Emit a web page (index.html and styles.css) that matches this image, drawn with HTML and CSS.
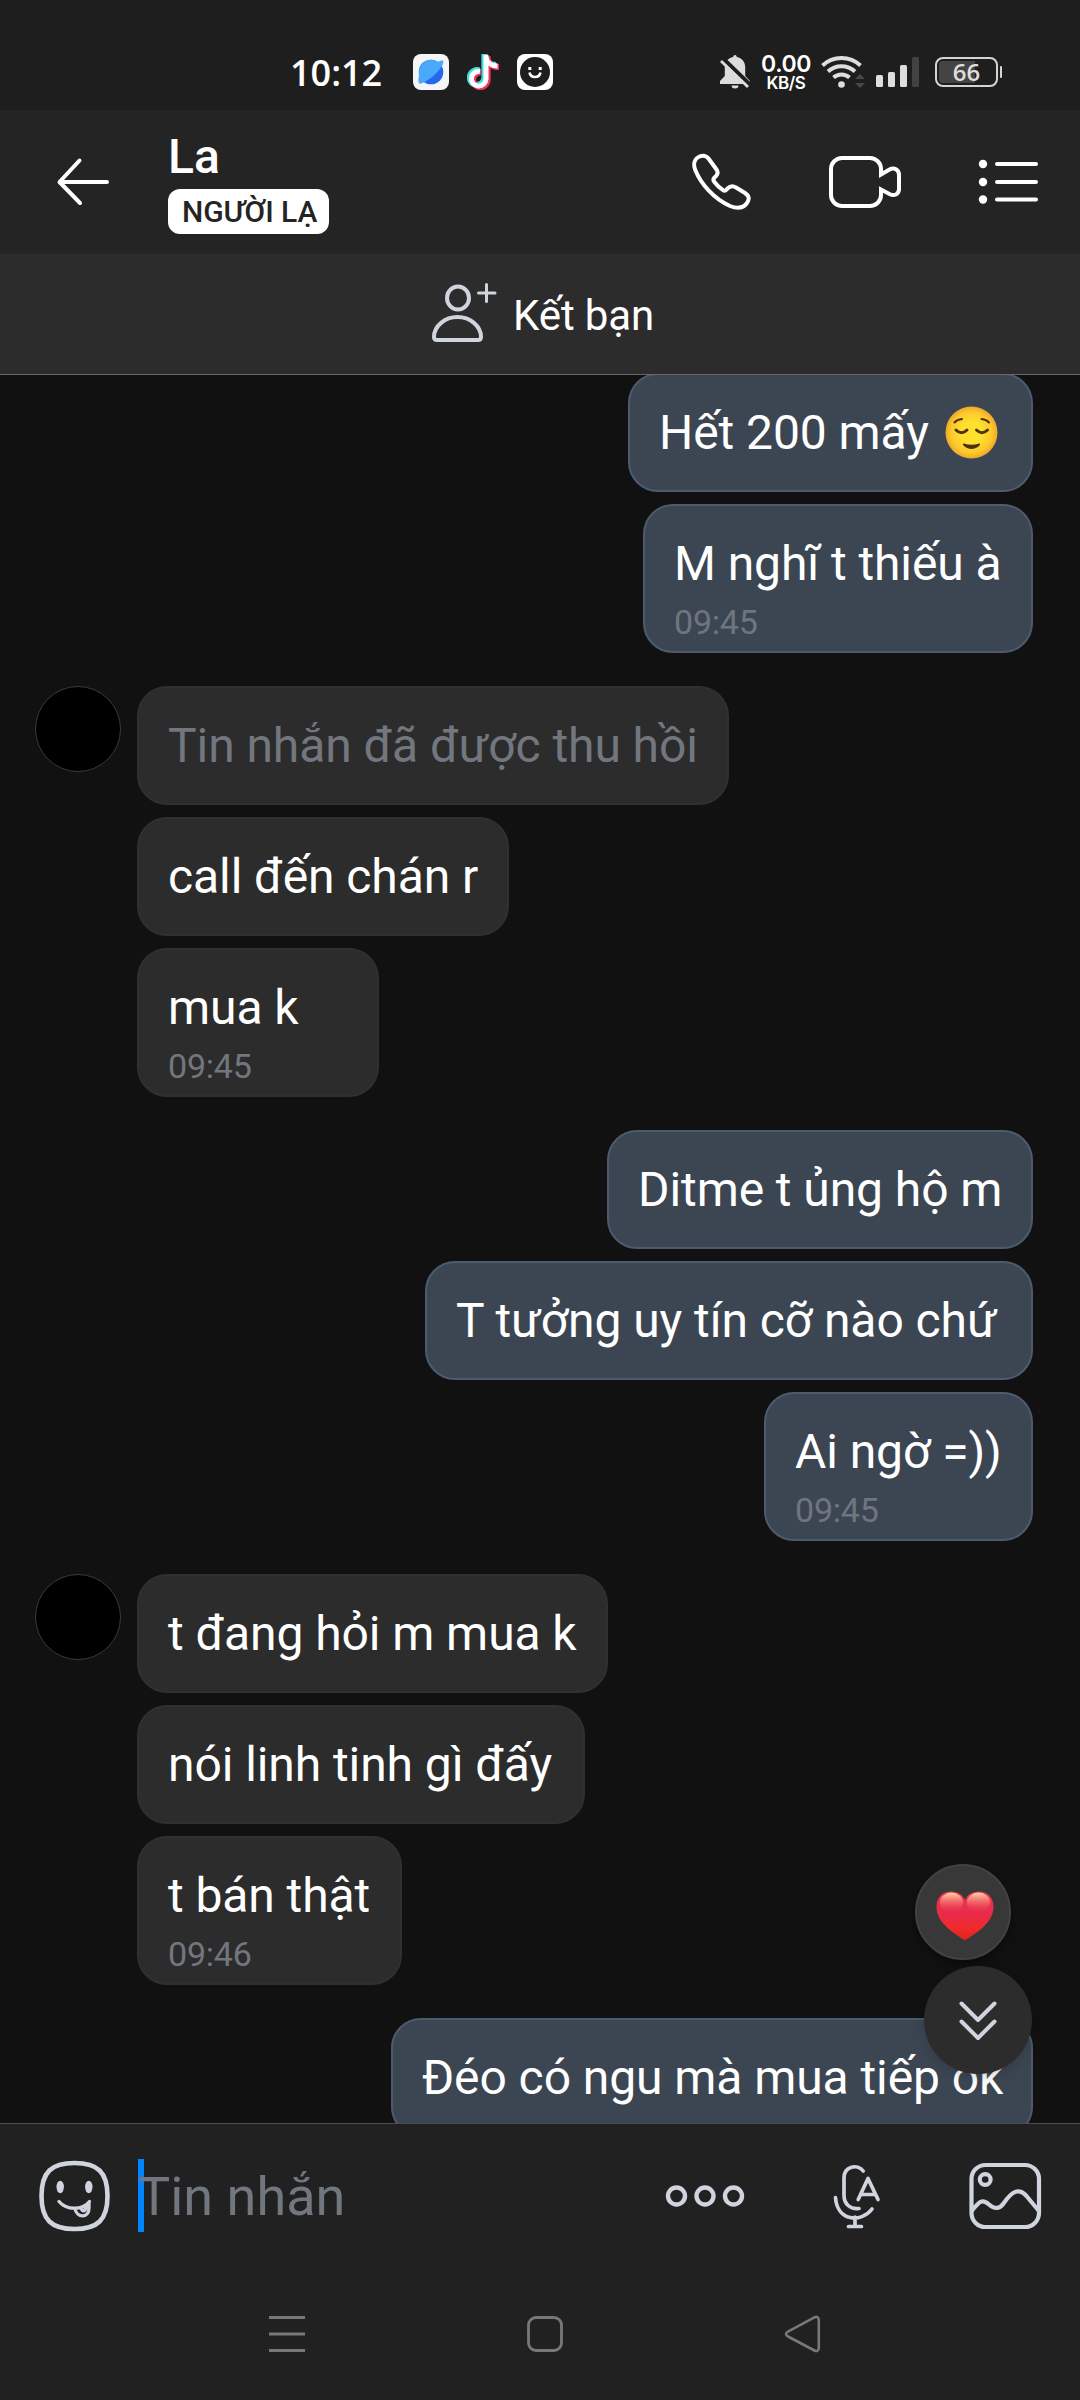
FILE: index.html
```html
<!DOCTYPE html>
<html lang="vi">
<head>
<meta charset="utf-8">
<title>La</title>
<link rel="stylesheet" href="styles.css">
</head>
<body>
<div class="phone">
  <div class="status">
    <span class="clock">10:12</span>
    <svg class="app-planet" width="36" height="36" viewBox="0 0 36 36"><rect width="36" height="36" rx="8" fill="#f4f5f7"/><circle cx="18" cy="18" r="12.3" fill="#2468ee"/><path d="M7 30C4 27 6 25 6 19A12.3 12.3 0 0 1 25 8C29 5.5 32 6 29.500 11C24 20 17 26 7 30Z" fill="#4aa9fb"/></svg>
    <svg class="app-note" width="33" height="36" viewBox="0 0 33 36"><g fill="none" stroke-width="6.200"><path d="M17.500 0V24.500A7.300 7.300 0 1 1 12.300 16.500M17.500 2C18 8 23 11 29 11" stroke="#3fe0dc"/><path d="M20.500 2V26A7.300 7.300 0 1 1 14 18.500M20.500 4C21 10 26 13 32 13" stroke="#f3355e"/><path d="M19 1V25A7.300 7.300 0 1 1 13 17.500M19 3C19.500 9 25 12 30.500 12" stroke="#fff" stroke-width="5"/></g></svg>
    <svg class="app-smile" width="36" height="36" viewBox="0 0 36 36"><rect width="36" height="36" rx="8" fill="#fff"/><circle cx="18" cy="18" r="15" fill="#1e1e1e"/><path d="M11.300 14.500h3M21.700 14.500h3" stroke="#fff" stroke-width="3"/><path d="M12.500 18.500a5.600 5.600 0 0 0 11 0" fill="none" stroke="#fff" stroke-width="2.600"/></svg>
    <svg class="bell" width="32" height="36" viewBox="719 54 32 36"><path d="M735 55c1.200 0 1.800 1 1.800 2 5.200 1 8.400 5 8.400 10v9l4.800 5v3h-30v-3l4.800-5v-9c0-5 3.200-9 8.400-10 0-1 .6-2 1.800-2zM731.500 85.500h7a3.500 3 0 0 1-7 0z" fill="#dcdcdc"/><path d="M722.500 58l29 28" stroke="#1e1e1e" stroke-width="4"/><path d="M721 61l27 26" stroke="#dcdcdc" stroke-width="2.800"/></svg>
    <div class="speed"><span class="rate">0.00</span><span class="unit">KB/S</span></div>
    <svg class="wifi" width="46" height="36" viewBox="820 53 46 36"><g fill="none" stroke="#dedede" stroke-width="4"><path d="M822.500 65.500a28 28 0 0 1 38 0M828 71.500a20 20 0 0 1 27 0M833.500 77.500a12 12 0 0 1 16 0"/></g><circle cx="841.500" cy="84.500" r="3.300" fill="#dedede"/><path d="M855 79l5-5 5 5zM855 83l5 5 5-5z" fill="#484848"/></svg>
    <svg class="signal" width="44" height="32" viewBox="876 56 44 32"><g fill="#dedede"><rect x="876" y="75" width="7" height="12" rx="1.500"/><rect x="888" y="72" width="7" height="15" rx="1.500"/><rect x="900" y="65" width="7" height="22" rx="1.500"/></g><rect x="912" y="57" width="7" height="30" rx="1.500" fill="#424242"/></svg>
    <div class="battery"><div class="level">66</div></div>
  </div>

  <header class="header">
    <svg class="back" width="54" height="50" viewBox="56 157.500 54 50"><path d="M79.500 161L59.500 182.500L80 203.500M60 182.500H107" fill="none" stroke="#fff" stroke-width="4" stroke-linecap="round" stroke-linejoin="round"/></svg>
    <div class="who"><div class="name">La</div><div class="badge">NGƯỜI LẠ</div></div>
    <svg class="call" width="60" height="60" viewBox="691 152 60 60"><path d="M699.500 156.500C703 155 706.500 156 708.500 158.500L716.500 169.500C719 173 717 175.500 714.500 177.500C713 179 713 180 714 181.500C717 185.500 720 188.500 723.500 190.500C725.500 191.500 726.500 189.500 727.500 188.500C730 186 733 185.500 736 187.500L745 193C749.500 196 749.500 199.500 747 203C743 208.500 737.500 209 730 206C714 199 701 184 695.500 170.500C692.500 163.500 695 158.500 699.500 156.500Z" fill="none" stroke="#fff" stroke-width="4" stroke-linejoin="round"/></svg>
    <svg class="video" width="74" height="56" viewBox="828 154 74 56"><path d="M881 174.500V169A11 11 0 0 0 870 158H842A11 11 0 0 0 831 169V195A11 11 0 0 0 842 206H870A11 11 0 0 0 881 195V189.500L889.500 194C894 196.500 899 194.500 899 189V175C899 169.500 894 167 889.500 169.500Z" fill="none" stroke="#fff" stroke-width="4"/></svg>
    <svg class="menu" width="62" height="50" viewBox="977 157 62 50"><g fill="#fff"><circle cx="983" cy="164" r="4.200"/><circle cx="983" cy="182" r="4.200"/><circle cx="983" cy="199.500" r="4.200"/></g><path d="M997 164H1036M997 182H1036M997 199.500H1036" stroke="#fff" stroke-width="4" stroke-linecap="round"/></svg>
  </header>

  <div class="add-friend">
    <svg width="66" height="64" viewBox="431 282 66 64"><g fill="none" stroke="#d0d4df" stroke-width="4" stroke-linecap="round" stroke-linejoin="round"><ellipse cx="458" cy="298" rx="11" ry="11.500"/><path d="M457.500 317C445 317 434 326 434 337Q434 340 437 340H478Q481 340 481 337C481 326 470 317 457.500 317Z"/><path d="M486.500 284.500V301.500M478.500 293H495" stroke-width="3"/></g></svg>
    <span>Kết bạn</span>
  </div>

  <main class="chat">
    <div class="group mine">
      <div class="bubble w405">Hết 200 mấy <svg class="emoji" width="53" height="53" viewBox="0 0 53 53"><defs><radialGradient id="face"><stop offset=".4" stop-color="#ffe02e"/><stop offset=".8" stop-color="#fdc82b"/><stop offset="1" stop-color="#eda72a"/></radialGradient></defs><circle cx="26.500" cy="26.500" r="26" fill="url(#face)"/><g fill="none" stroke="#4e3209" stroke-linecap="round"><path d="M9.500 16.500Q12 13.500 17 13M44 16.500Q41.500 13.500 36.500 13" stroke-width="2"/><path d="M11 24Q16.500 29.500 22 24M31.500 24Q37 29.500 42.500 24" stroke-width="3"/></g><path d="M19 37.500Q26.500 40 34 37.500C35 37.300 35.500 38.500 34.500 39.500C30.500 44 22.500 44 18.500 39.500C17.500 38.500 18 37.300 19 37.500Z" fill="#4e3209"/></svg></div>
      <div class="bubble timed w390">M nghĩ t thiếu à<time>09:45</time></div>
    </div>
    <div class="group theirs">
      <div class="avatar"></div>
      <div class="stack">
        <div class="bubble recalled w591">Tin nhắn đã được thu hồi</div>
        <div class="bubble w372">call đến chán r</div>
        <div class="bubble timed w242">mua k<time>09:45</time></div>
      </div>
    </div>
    <div class="group mine">
      <div class="bubble w426">Ditme t ủng hộ m</div>
      <div class="bubble w608">T tưởng uy tín cỡ nào chứ</div>
      <div class="bubble timed w269">Ai ngờ =))<time>09:45</time></div>
    </div>
    <div class="group theirs">
      <div class="avatar"></div>
      <div class="stack">
        <div class="bubble w471">t đang hỏi m mua k</div>
        <div class="bubble w448">nói linh tinh gì đấy</div>
        <div class="bubble timed w265">t bán thật<time>09:46</time></div>
      </div>
    </div>
    <div class="group mine">
      <div class="bubble w642">Đéo có ngu mà mua tiếp ok</div>
    </div>

    <div class="float react">
      <svg width="58" height="50" viewBox="0 0 58 50"><defs><linearGradient id="heart" x1="0" y1="0" x2="0" y2="1"><stop offset="0" stop-color="#ee3a50"/><stop offset=".45" stop-color="#e82a4b"/><stop offset=".75" stop-color="#f22a2c"/><stop offset="1" stop-color="#d92420"/></linearGradient><linearGradient id="shine" x1="0" y1="0" x2="0" y2="1"><stop offset="0" stop-color="#ffd9a8"/><stop offset="1" stop-color="#f0455a" stop-opacity="0"/></linearGradient></defs><path d="M29 49.500C20 43 .5 33 .5 16C.5 6 7 .5 15 .5C22 .5 26.500 4 29 9C31.500 4 36 .5 43 .5C51 .5 57.500 6 57.500 16C57.500 33 38 43 29 49.500Z" fill="url(#heart)"/><ellipse cx="15.500" cy="11.500" rx="11.500" ry="10" fill="url(#shine)"/><ellipse cx="42.500" cy="11.500" rx="11.500" ry="10" fill="url(#shine)"/></svg>
    </div>
    <div class="float jump">
      <svg width="40" height="42" viewBox="958 2000 40 42"><path d="M961.500 2003.500L978 2020L994.500 2003.500M961.500 2021.500L978 2038L994.500 2021.500" fill="none" stroke="#d0d4df" stroke-width="4" stroke-linecap="round" stroke-linejoin="round"/></svg>
    </div>
  </main>

  <footer class="composer">
    <svg width="72" height="74" viewBox="38.500 2159 72 74"><path d="M75 2163C98 2163 108 2172 108 2196C108 2220 98 2229 75 2229C52 2229 42 2220 42 2196C42 2172 52 2163 75 2163Z" fill="none" stroke="#d0d4df" stroke-width="4.600"/><ellipse cx="60.700" cy="2187" rx="3.700" ry="6.200" fill="#d0d4df"/><ellipse cx="89.300" cy="2187" rx="3.700" ry="6.200" fill="#d0d4df"/><path d="M59.500 2201.500C67 2210.500 83 2210.500 90 2201.500M75.500 2208.500C77 2218.500 90 2218.500 89.500 2207.500V2203M82 2208.500C82.500 2212 86 2212 86.500 2206" fill="none" stroke="#d0d4df" stroke-width="3.300" stroke-linecap="round"/></svg>
    <div class="field"><span class="caret"></span>Tin nhắn</div>
    <svg class="more" width="80" height="24" viewBox="665 2184 80 24"><g fill="none" stroke="#d0d4df" stroke-width="4.400"><circle cx="676.500" cy="2196" r="8.500"/><circle cx="705" cy="2196" r="8.500"/><circle cx="733.500" cy="2196" r="8.500"/></g></svg>
    <svg class="mic" width="50" height="68" viewBox="832 2162 50 68"><g fill="none" stroke="#d0d4df" stroke-width="3.700" stroke-linecap="round" stroke-linejoin="round"><path d="M863.200 2171C857.500 2163.500 844 2166 844 2178V2195C844 2204 850 2209.500 859 2208.500M835.500 2197.500C837 2221 861 2223.500 872 2209M855 2217V2226.500M848.500 2226.500H861.500M858.200 2199.500L868 2178.500L878 2199.500M861 2194.500H875"/></g></svg>
    <svg class="image" width="74" height="70" viewBox="968 2161 74 70"><g fill="none" stroke="#d0d4df" stroke-width="4.200"><rect x="971.500" y="2165" width="67.500" height="62" rx="14"/><circle cx="985.200" cy="2179.500" r="5.400"/><path d="M971.500 2211C979 2202 982 2198 989 2204.500C995 2210 1000 2208.500 1003.500 2203.500C1012 2191 1019 2187.500 1026.500 2196L1038.500 2210.500"/></g></svg>
  </footer>

  <nav class="nav">
    <svg width="36" height="38" viewBox="269 2315 36 38"><path d="M269 2317.500H305M269 2334H305M269 2350.500H305" stroke="#787878" stroke-width="3"/></svg>
    <svg class="home" width="38" height="38" viewBox="526 2315 38 38"><rect x="528.500" y="2317.500" width="33" height="33" rx="7.500" fill="none" stroke="#787878" stroke-width="2.800"/></svg>
    <svg class="prev" width="38" height="38" viewBox="784 2315 38 38"><path d="M813.500 2317.800Q818.800 2315 818.800 2320.500V2347.500Q818.800 2353 813.500 2350L788 2336.500Q784 2334 788 2331.500Z" fill="none" stroke="#787878" stroke-width="2.600"/></svg>
  </nav>
</div>
</body>
</html>
```
FILE: styles.css
```css
* { box-sizing: border-box; }
body { margin: 0; background: #212121; font-family: Roboto, "Noto Sans", sans-serif; color: #fff; }
svg { display: block; flex: none; }
.phone { width: 1080px; height: 2400px; display: flex; flex-direction: column; overflow: hidden; }

.status { height: 110px; flex: none; background: #1e1e1e; display: flex; align-items: flex-start; padding: 54px 0 0 290px; font-family: "Open Sans", sans-serif; }
.clock { width: 123px; font-size: 36px; line-height: 37px; font-weight: 600; white-space: nowrap; }
.app-note { margin-left: 18px; }
.app-smile { margin-left: 17px; }
.bell { margin-left: 166px; }
.speed { width: 54px; margin-left: 8px; display: flex; flex-direction: column; align-items: center; font-family: Inter, sans-serif; font-weight: 600; }
.rate { font-size: 23px; line-height: 20px; letter-spacing: -.4px; }
.unit { font-size: 17px; line-height: 17px; margin-top: 1px; letter-spacing: -.4px; }
.wifi { margin-left: 7px; margin-top: -1px; }
.signal { margin-left: 10px; margin-top: 2px; }
.battery { position: relative; width: 63px; height: 30px; margin: 3px 0 0 15px; border: 2.500px solid #d4d4d4; border-radius: 8px; padding: 2px; }
.battery::after { content: ""; position: absolute; right: -6px; top: 7px; width: 2px; height: 12px; background: #d4d4d4; border-radius: 1px; }
.level { height: 100%; border-radius: 4px; background: linear-gradient(90deg, #444 66%, transparent 66%); font-size: 24px; line-height: 22px; text-align: center; color: #dedede; font-weight: 600; }

.header { height: 144px; flex: none; background: #242424; display: flex; align-items: center; padding-left: 56px; }
.who { width: 240px; margin-left: 58px; display: flex; flex-direction: column; align-items: flex-start; }
.name { font-size: 48px; line-height: 56px; font-weight: 500; margin-top: -2px; }
.badge { height: 45px; margin-top: 4px; padding: 0 12px 0 14px; border-radius: 12px; background: #fff; color: #242424; font-size: 30px; line-height: 45px; font-weight: 500; letter-spacing: -.1px; white-space: nowrap; }
.call { margin-left: 283px; }
.video { margin-left: 77px; }
.menu { margin-left: 75px; }

.add-friend { height: 121px; flex: none; background: #2c2c2c; border-bottom: 1px solid #666; display: flex; align-items: center; padding-left: 431px; gap: 16px; font-size: 42px; letter-spacing: -.1px; }
.add-friend span { line-height: 50px; padding-top: 3px; }

.chat { position: relative; height: 1748px; flex: none; overflow: hidden; background: #111; padding: 0 47px 0 35px; }
.group { display: flex; margin-bottom: 33px; }
.group:first-child { margin-top: -2px; }
.mine { flex-direction: column; align-items: flex-end; gap: 12px; }
.theirs { align-items: flex-start; gap: 16px; }
.stack { display: flex; flex-direction: column; align-items: flex-start; gap: 12px; }
.avatar { width: 86px; height: 86px; border-radius: 50%; background: #000; border: 1px solid #3a3a3a; }
.bubble { height: 119px; padding: 30px 0 0 29px; border: 2px solid #303030; border-radius: 30px; background: #2c2c2c; font-size: 48px; line-height: 56px; letter-spacing: -.08px; white-space: nowrap; }
.mine .bubble { background: #3c4653; border-color: #4d5b6e; }
.timed { height: 149px; }
.bubble time { display: block; margin-top: 10px; font-size: 34px; line-height: 40px; letter-spacing: -.2px; color: #72777f; }
.mine .bubble time { color: #6f757e; }
.recalled { color: #72777f; }
.emoji { display: inline-block; vertical-align: -10px; margin-left: 4px; }
.w242 { width: 242px; }
.w265 { width: 265px; }
.w269 { width: 269px; }
.w372 { width: 372px; }
.w390 { width: 390px; }
.w405 { width: 405px; }
.w426 { width: 426px; }
.w448 { width: 448px; }
.w471 { width: 471px; }
.w591 { width: 592px; }
.w608 { width: 608px; }
.w642 { width: 642px; }

.float { position: absolute; border-radius: 50%; display: flex; align-items: center; justify-content: center; }
.react { right: 69px; bottom: 163px; width: 96px; height: 96px; background: #383838; border: 2px solid #424242; box-shadow: 0 4px 10px rgba(0, 0, 0, .4); padding: 8px 0 0 4px; }
.jump { right: 48px; bottom: 49px; width: 108px; height: 108px; background: #2c2c2c; box-shadow: 0 3px 14px rgba(0, 0, 0, .18); padding-top: 2px; }

.composer { height: 147px; flex: none; border-top: 1px solid #4c4c4c; background: #212121; display: flex; align-items: center; padding: 0 0 2px 38px; }
.field { position: relative; width: 400px; margin-left: 28px; font-size: 54px; line-height: 75px; color: #72777f; white-space: nowrap; z-index: 0; }
.caret { position: absolute; left: 0; top: 0; width: 6px; height: 73px; background: #0084ff; z-index: -1; }
.more { margin-left: 127px; }
.mic { margin-left: 87px; }
.image { margin-left: 86px; }

.nav { height: 130px; flex: none; background: #212121; display: flex; align-items: flex-start; padding: 45px 0 0 269px; }
.home { margin-left: 221px; }
.prev { margin-left: 220px; }
```
